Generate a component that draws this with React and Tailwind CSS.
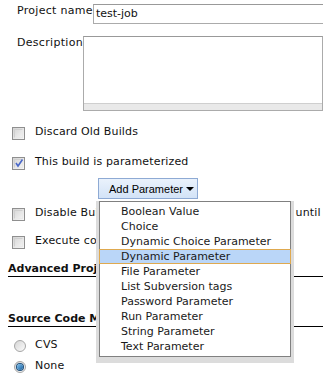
import React from "react";

const font = { fontFamily: '"DejaVu Sans", Verdana, sans-serif' };

function Checkbox({ checked }) {
  return (
    <div className="relative w-[13px] h-[13px] shrink-0 border border-[#8f8f8f] bg-gradient-to-br from-[#d4d4d4] to-[#f7f7f7]">
      <div className="absolute inset-[1px] border border-[#e9e9e9] border-t-[#cfcfcf] border-l-[#cfcfcf]" />
      {checked && (
        <svg className="absolute left-[1px] top-[0px]" width="10" height="10" viewBox="0 0 10 10">
          <path d="M2 5 L4 8 L8.5 1.5" fill="none" stroke="#4a68c8" strokeWidth="1.6" />
        </svg>
      )}
    </div>
  );
}

function Radio({ checked }) {
  return (
    <div className="relative w-[12px] h-[12px] shrink-0 rounded-full border border-[#a6a6a6] bg-gradient-to-br from-[#d6d6d6] to-[#fbfbfb] flex items-center justify-center">
      {checked && (
        <div className="w-[6px] h-[6px] rounded-full bg-gradient-to-br from-[#7fc4f2] to-[#17609e] ring-1 ring-[#1f4f7a]" />
      )}
    </div>
  );
}

function CheckRow({ checked, children, className = "" }) {
  return (
    <div className={"flex items-center h-[16px] pl-[12px] whitespace-nowrap " + className}>
      <Checkbox checked={checked} />
      <span className="ml-[10px] leading-[16px] -mt-[3px] tracking-[0.15px]">{children}</span>
    </div>
  );
}

const items = [
  "Boolean Value",
  "Choice",
  "Dynamic Choice Parameter",
  "Dynamic Parameter",
  "File Parameter",
  "List Subversion tags",
  "Password Parameter",
  "Run Parameter",
  "String Parameter",
  "Text Parameter",
];

export default function App() {
  return (
    <div
      className="relative w-[323px] h-[379px] overflow-hidden bg-white text-[11px] text-[#111]"
      style={font}
    >
      <div className="pt-[4px]">
        {/* Project name */}
        <div className="flex whitespace-nowrap">
          <div className="w-[97px] pl-[17px] leading-[14px] pt-[0px] tracking-[0.3px]">Project name</div>
          <div className="w-[240px] h-[20px] border border-[#ababab] border-t-[#999] pl-[2px] leading-[18px] shrink-0">
            test-job
          </div>
        </div>
        {/* Description */}
        <div className="flex mt-[12px] whitespace-nowrap">
          <div className="w-[97px] pl-[17px] leading-[14px] pt-[0px] tracking-[0.3px]">Description</div>
          <div className="w-[240px] h-[75px] border border-[#ababab] border-t-[#999] shrink-0 flex flex-col justify-end">
            <div className="h-[7px] bg-[#e9e9e9] border-t border-[#cfcfcf]" />
          </div>
        </div>

        <CheckRow className="mt-[14px]">Discard Old Builds</CheckRow>
        <CheckRow checked className="mt-[14px]">This build is parameterized</CheckRow>

        {/* Add Parameter button */}
        <div className="mt-[7px] pl-[98px]">
          <div
            className="w-[100px] h-[21px] border border-[#8eaad4] bg-gradient-to-b from-[#eaf2fc] to-[#d3e3f7] flex items-center pl-[10px] text-black"
            style={{ fontFamily: '"Liberation Sans", Arial, sans-serif' }}
          >
            <span className="leading-[14px]">Add Parameter</span>
            <span className="ml-[3px] w-0 h-0 border-l-[4px] border-r-[4px] border-t-[4px] border-l-transparent border-r-transparent border-t-black" />
          </div>
        </div>

        <CheckRow className="mt-[7px]">
          Disable Build (No new builds will be executed until the project is re-enabled.)
        </CheckRow>
        <CheckRow className="mt-[12px]">Execute concurrent builds if necessary</CheckRow>

        {/* Advanced heading */}
        <div className="mt-[12px] ml-[8px] w-[330px] border-b border-black leading-[14px] font-bold whitespace-nowrap">
          Advanced Project Options
        </div>
        {/* Source code heading */}
        <div className="mt-[35px] ml-[8px] w-[330px] border-b border-black leading-[14px] font-bold whitespace-nowrap">
          Source Code Management
        </div>

        <div className="mt-[11px] flex items-center h-[16px] pl-[14px]">
          <Radio />
          <span className="ml-[9px] leading-[16px] -mt-[2px] tracking-[0.2px]">CVS</span>
        </div>
        <div className="mt-[5px] flex items-center h-[16px] pl-[14px]">
          <Radio checked />
          <span className="ml-[9px] leading-[16px] -mt-[2px] tracking-[0.2px]">None</span>
        </div>
      </div>

      {/* Dropdown menu overlay */}
      <div className="absolute left-[99px] top-[201px] w-[192px] border border-[#808080] bg-white pt-[2px] pb-[2px] shadow-[0_3px_0_3px_#dcdcdc] text-[#1a1a1a]">
        {items.map((it, i) => (
          <div
            key={it}
            className={
              "h-[15px] leading-[13px] pl-[20px] whitespace-nowrap border " +
              (i === 3
                ? "bg-[#bad6f8] border-[#dfa94f] -mx-[1px] pl-[21px]"
                : "border-transparent")
            }
          >
            {it}
          </div>
        ))}
      </div>
    </div>
  );
}
